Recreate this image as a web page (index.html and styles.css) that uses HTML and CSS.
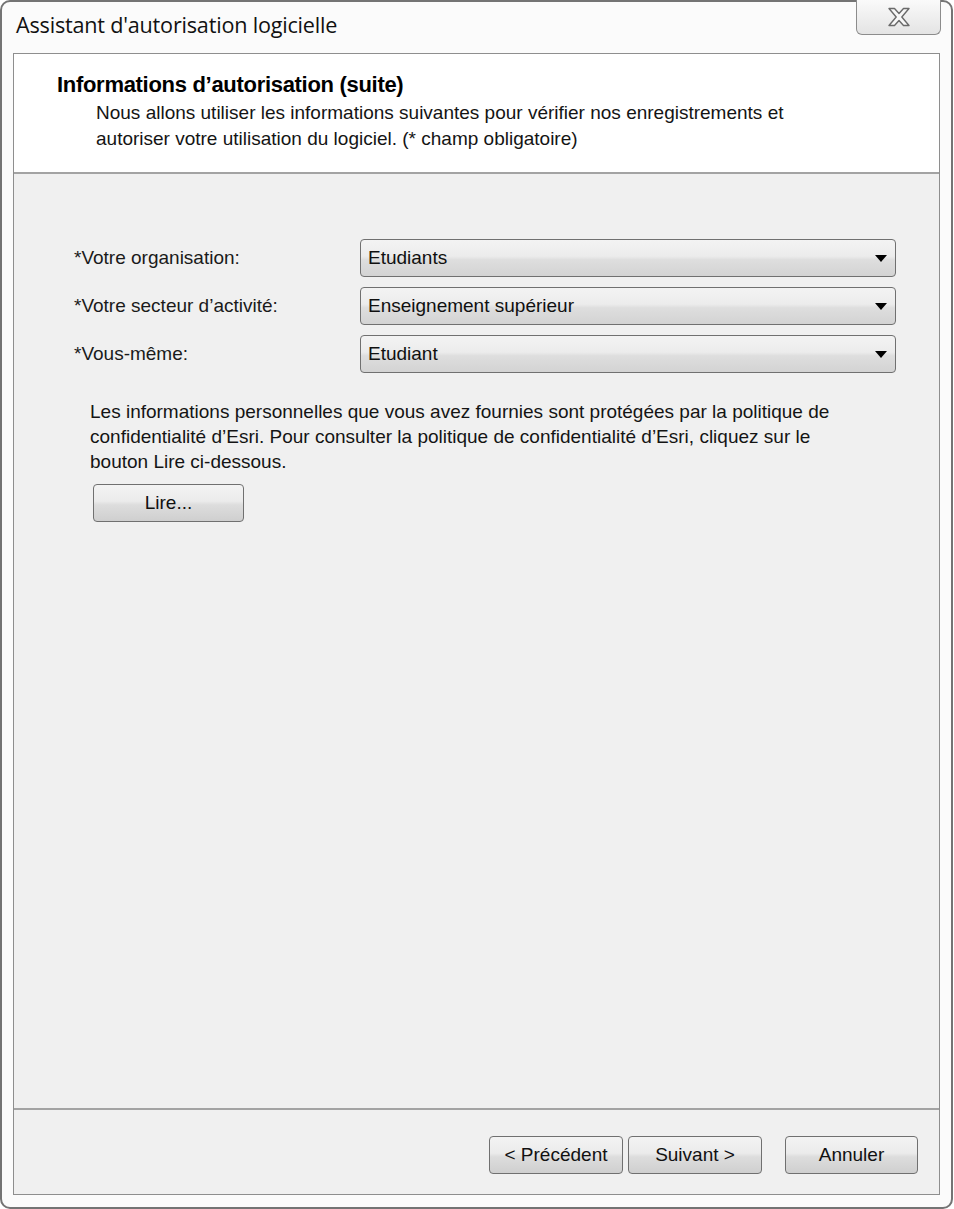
FILE: index.html
```html
<!DOCTYPE html>
<html lang="fr">
<head>
<meta charset="utf-8">
<title>Assistant d'autorisation logicielle</title>
<link rel="stylesheet" href="styles.css">
</head>
<body>
<div class="window">
  <div class="titlebar">
    <span class="title">Assistant d'autorisation logicielle</span>
    <button class="close" type="button" aria-label="Fermer">
      <svg width="24" height="20" viewBox="0 0 24 20">
        <path d="M2 1.5h5.5l4.5 5 4.5-5H22l-7.2 8.5 7.2 8.5h-5.5l-4.5-5-4.5 5H2l7.2-8.5z" fill="#f7f7f7" stroke="#6a6a6a" stroke-width="1.4" stroke-linejoin="round"/>
      </svg>
    </button>
  </div>

  <div class="client">
    <header class="header">
      <h1 class="heading">Informations d’autorisation (suite)</h1>
      <p class="intro">Nous allons utiliser les informations suivantes pour vérifier nos enregistrements et autoriser votre utilisation du logiciel. (* champ obligatoire)</p>
    </header>

    <main class="body">
      <div class="form">
        <label class="label">*Votre organisation:</label>
        <div class="combo"><span>Etudiants</span><i class="arrow"></i></div>
        <label class="label">*Votre secteur d’activité:</label>
        <div class="combo"><span>Enseignement supérieur</span><i class="arrow"></i></div>
        <label class="label">*Vous-même:</label>
        <div class="combo"><span>Etudiant</span><i class="arrow"></i></div>
      </div>

      <p class="privacy">Les informations personnelles que vous avez fournies sont protégées par la politique de confidentialité d’Esri. Pour consulter la politique de confidentialité d’Esri, cliquez sur le bouton Lire ci-dessous.</p>

      <button class="btn btn-read" type="button">Lire...</button>
    </main>

    <footer class="footer">
      <button class="btn btn-nav" type="button">&lt; Précédent</button>
      <button class="btn btn-nav" type="button">Suivant &gt;</button>
      <button class="btn btn-nav btn-cancel" type="button">Annuler</button>
    </footer>
  </div>
</div>
</body>
</html>
```

FILE: styles.css
```css
* {
  box-sizing: border-box;
}

html, body {
  margin: 0;
  padding: 0;
  background: #ffffff;
}

body {
  font-family: "Liberation Sans", Arial, sans-serif;
  font-size: 19px;
  color: #141414;
}

/* Outer window frame */
.window {
  width: 953px;
  height: 1209px;
  border: 2px solid #747474;
  border-radius: 10px;
  background: #fbfbfb;
  display: flex;
  flex-direction: column;
  padding: 0 11px 12px 11px;
}

.titlebar {
  height: 51px;
  display: flex;
  justify-content: space-between;
  align-items: flex-start;
}

.title {
  font-family: "Open Sans", "Noto Sans", sans-serif;
  font-size: 21.6px;
  line-height: 30px;
  color: #111;
  margin: 8px 0 0 3px;
  letter-spacing: -0.2px;
}

.close {
  width: 85px;
  height: 35px;
  margin: -2px -1px 0 0;
  border: 1px solid #8c8c8c;
  border-top: none;
  border-radius: 0 0 6px 6px;
  background: linear-gradient(#fafafa, #efefef 50%, #e4e4e4);
  display: flex;
  align-items: center;
  justify-content: center;
  padding: 0;
}

/* Client area of the dialog */
.client {
  flex: 1;
  border: 1px solid #8e8e8e;
  background: #f0f0f0;
  display: flex;
  flex-direction: column;
}

.header {
  height: 120px;
  background: #ffffff;
  border-bottom: 2px solid #a3a3a3;
  padding: 19px 0 0 43px;
}

.heading {
  margin: 0;
  font-size: 22px;
  font-weight: bold;
  color: #000;
  line-height: 24px;
  letter-spacing: -0.3px;
}

.intro {
  margin: 3px 0 0 39px;
  width: 740px;
  line-height: 26px;
}

.body {
  flex: 1;
  padding: 65px 0 0 60px;
}

.form {
  display: grid;
  grid-template-columns: 286px 536px;
  row-gap: 10px;
  align-items: center;
}

.label {
  color: #1a1a1a;
}

.combo {
  height: 38px;
  border: 1px solid #707070;
  border-radius: 4px;
  background: linear-gradient(#f3f3f3, #ececec 45%, #dedede 55%, #d3d3d3);
  display: flex;
  align-items: center;
  justify-content: space-between;
  padding: 0 8px 0 7px;
  color: #101010;
}

.arrow {
  width: 0;
  height: 0;
  border-left: 6.5px solid transparent;
  border-right: 6.5px solid transparent;
  border-top: 7px solid #000;
  margin-top: 1px;
}

.privacy {
  margin: 26px 0 0 16px;
  width: 770px;
  line-height: 25px;
}

.btn {
  font-family: inherit;
  font-size: 19px;
  color: #111;
  height: 38px;
  border: 1px solid #707070;
  border-radius: 4px;
  background: linear-gradient(#f3f3f3, #ebebeb 45%, #dddddd 55%, #cfcfcf);
  padding: 0;
}

.btn-read {
  width: 151px;
  margin: 10px 0 0 19px;
}

.footer {
  height: 86px;
  border-top: 2px solid #a3a3a3;
  display: flex;
  align-items: flex-start;
  padding: 26px 0 0 475px;
  gap: 5px;
}

.btn-nav {
  width: 134px;
}

.btn-cancel {
  width: 133px;
  margin-left: 18px;
}
```
